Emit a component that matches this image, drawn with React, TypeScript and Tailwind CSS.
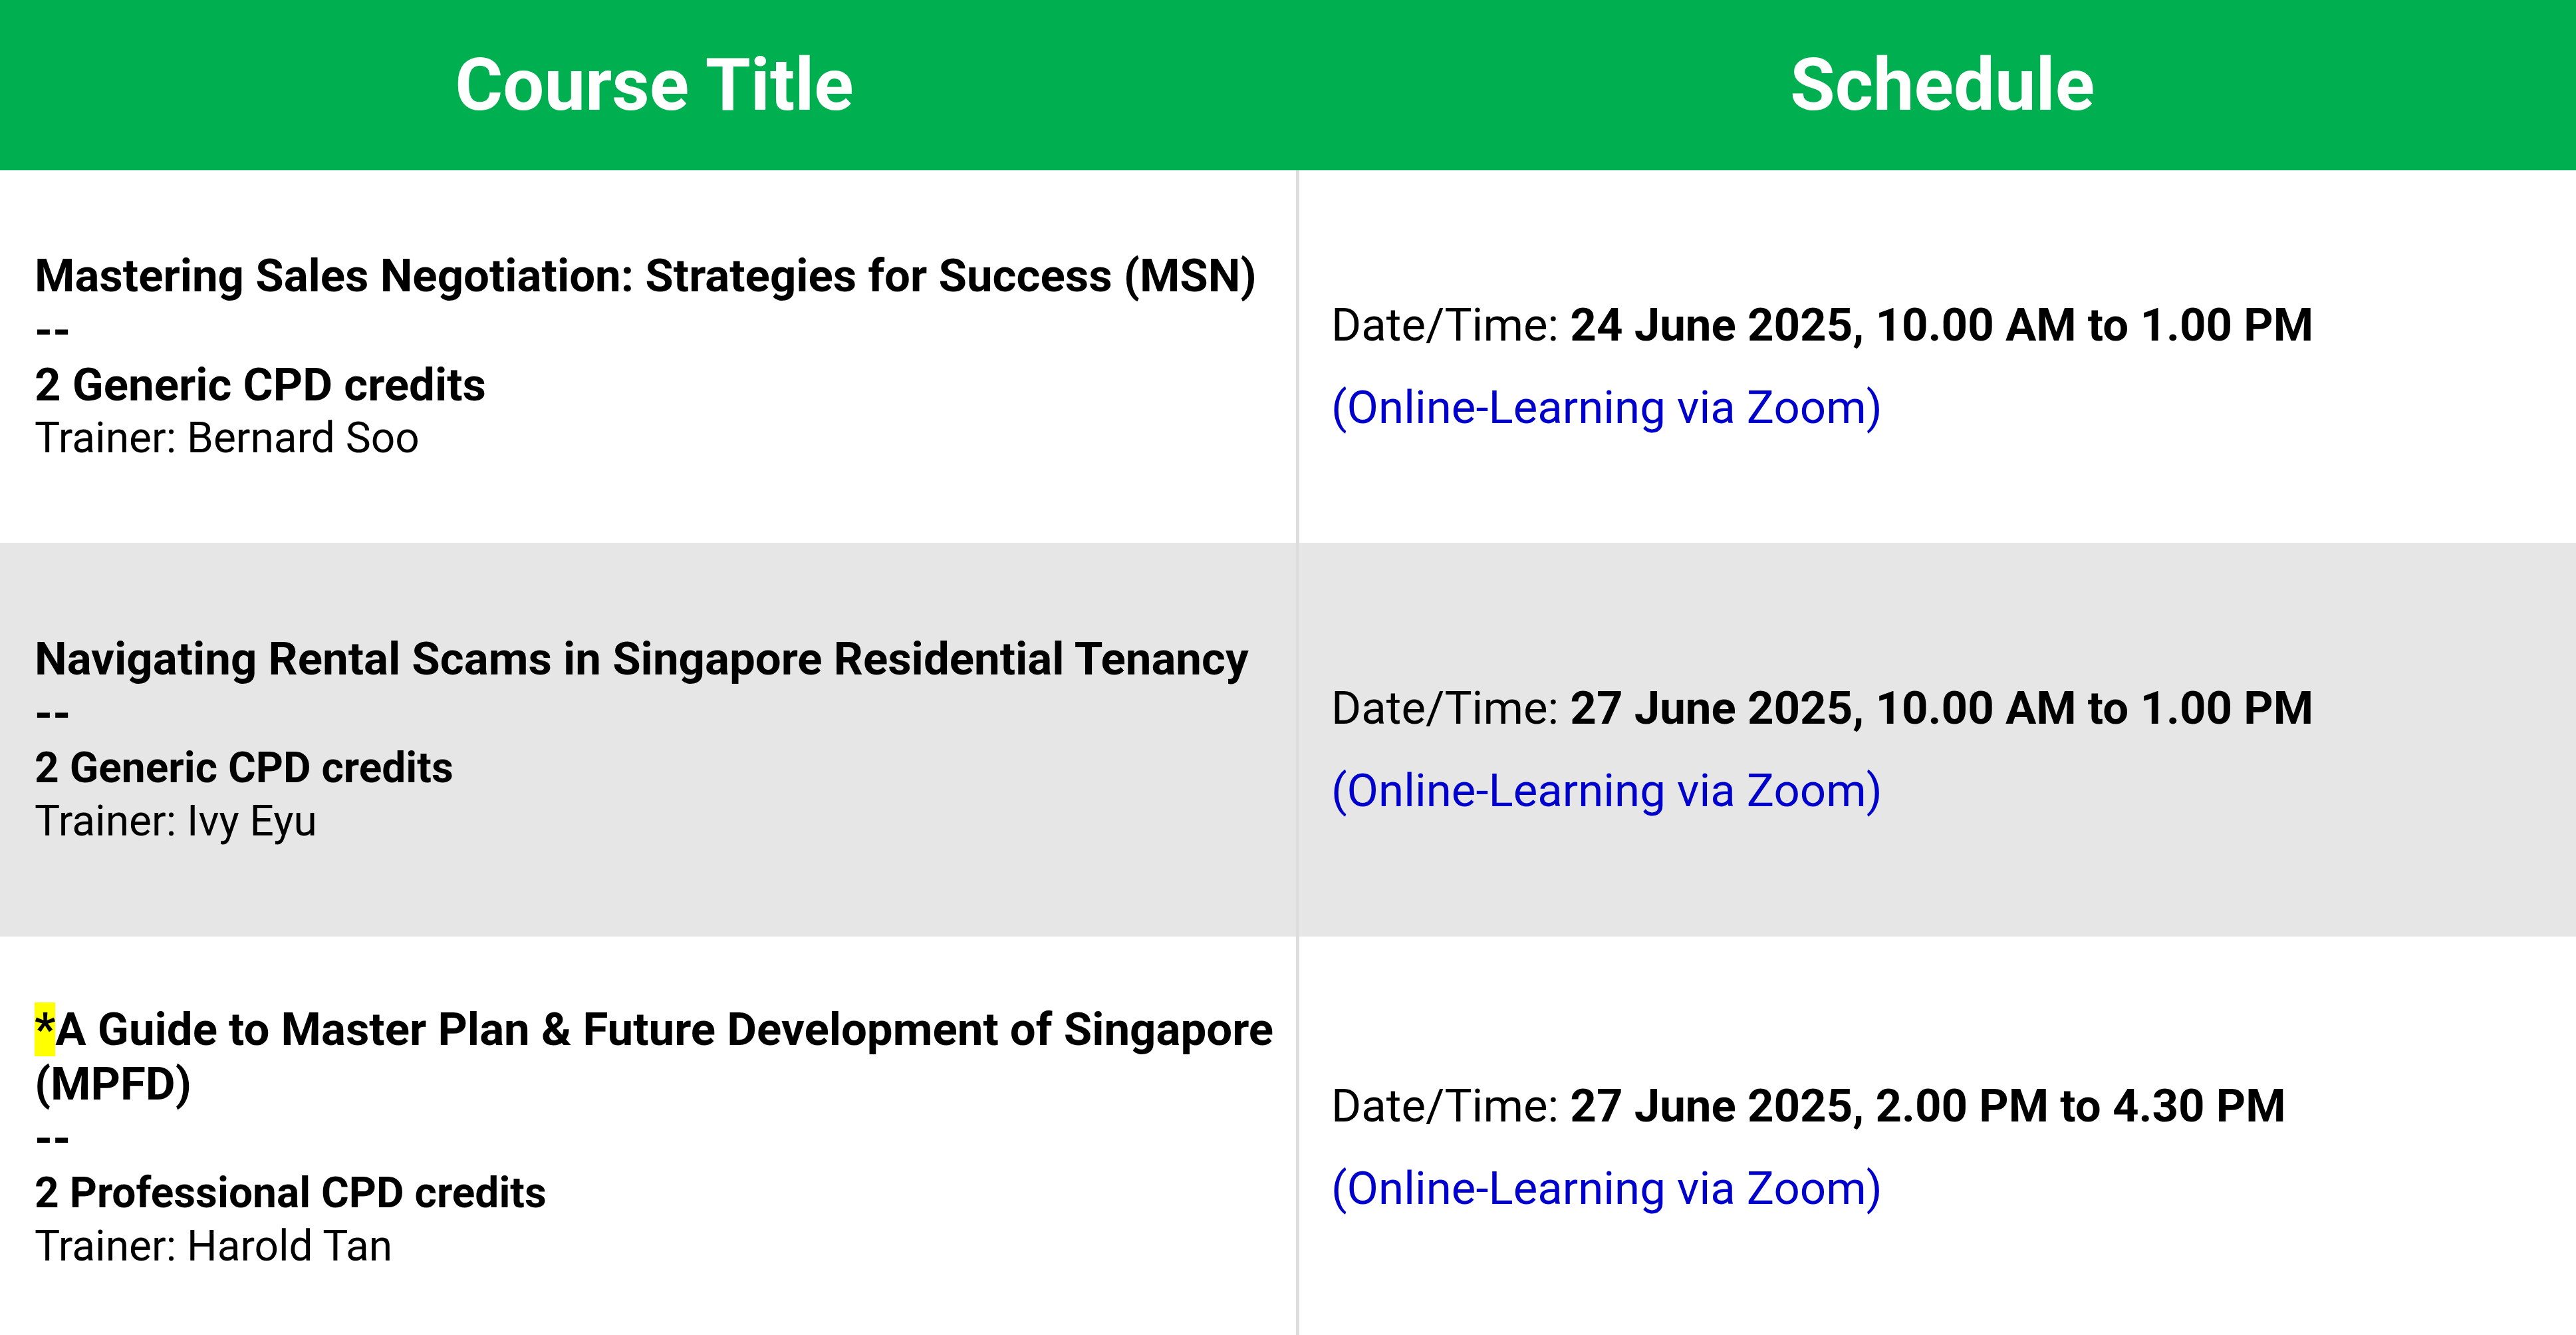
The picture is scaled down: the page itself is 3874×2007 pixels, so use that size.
const courses = [
  {
    title: "Mastering Sales Negotiation: Strategies for Success (MSN)",
    credits: "2 Generic CPD credits",
    creditsClass: "text-[69px]",
    trainer: "Trainer: Bernard Soo",
    date: "24 June 2025, 10.00 AM to 1.00 PM",
    highlight: false,
    rowClass: "h-[560px] bg-white",
  },
  {
    title: "Navigating Rental Scams in Singapore Residential Tenancy",
    credits: "2 Generic CPD credits",
    creditsClass: "text-[64px]",
    trainer: "Trainer: Ivy Eyu",
    date: "27 June 2025, 10.00 AM to 1.00 PM",
    highlight: false,
    rowClass: "h-[592px] bg-[#e6e6e6]",
  },
  {
    title: "A Guide to Master Plan & Future Development of Singapore (MPFD)",
    credits: "2 Professional CPD credits",
    creditsClass: "text-[64px]",
    trainer: "Trainer: Harold Tan",
    date: "27 June 2025, 2.00 PM to 4.30 PM",
    highlight: true,
    rowClass: "h-[604px] bg-white",
  },
];

const App = () => {
  return (
    <div className="min-h-screen w-full bg-white text-black font-['Roboto',sans-serif] overflow-hidden">
      {/* header */}
      <div className="grid grid-cols-[1954px_1fr] h-[256px] bg-[#00b050]">
        <div className="flex items-center justify-center text-white text-[110px] font-bold leading-none pl-[14px]">
          Course Title
        </div>
        <div className="flex items-center justify-center text-white text-[110px] font-bold leading-none pl-[14px]">
          Schedule
        </div>
      </div>

      {courses.map((c) => (
        <div key={c.title} className={`grid grid-cols-[1954px_1fr] ${c.rowClass}`}>
          <div className="flex items-center pl-[52px] pr-[8px] border-r-[5px] border-[#dddddd]">
            <div>
              <div className="text-[69px] leading-[82px] font-bold">
                {c.highlight && <span className="bg-[#ffff00]">*</span>}
                {c.title}
              </div>
              <div className="text-[69px] leading-[82px] font-bold">--</div>
              <div className={`${c.creditsClass} leading-[82px] font-bold`}>{c.credits}</div>
              <div className="text-[64px] leading-[78px]">{c.trainer}</div>
            </div>
          </div>
          <div className="flex items-center pl-[48px] pt-[30px]">
            <div>
              <div className="text-[69px] leading-[82px]">
                Date/Time: <span className="font-bold">{c.date}</span>
              </div>
              <div className="mt-[42px] text-[69px] leading-[82px] text-[#0000cc]">
                (Online-Learning via Zoom)
              </div>
            </div>
          </div>
        </div>
      ))}
    </div>
  );
};

export default App;
